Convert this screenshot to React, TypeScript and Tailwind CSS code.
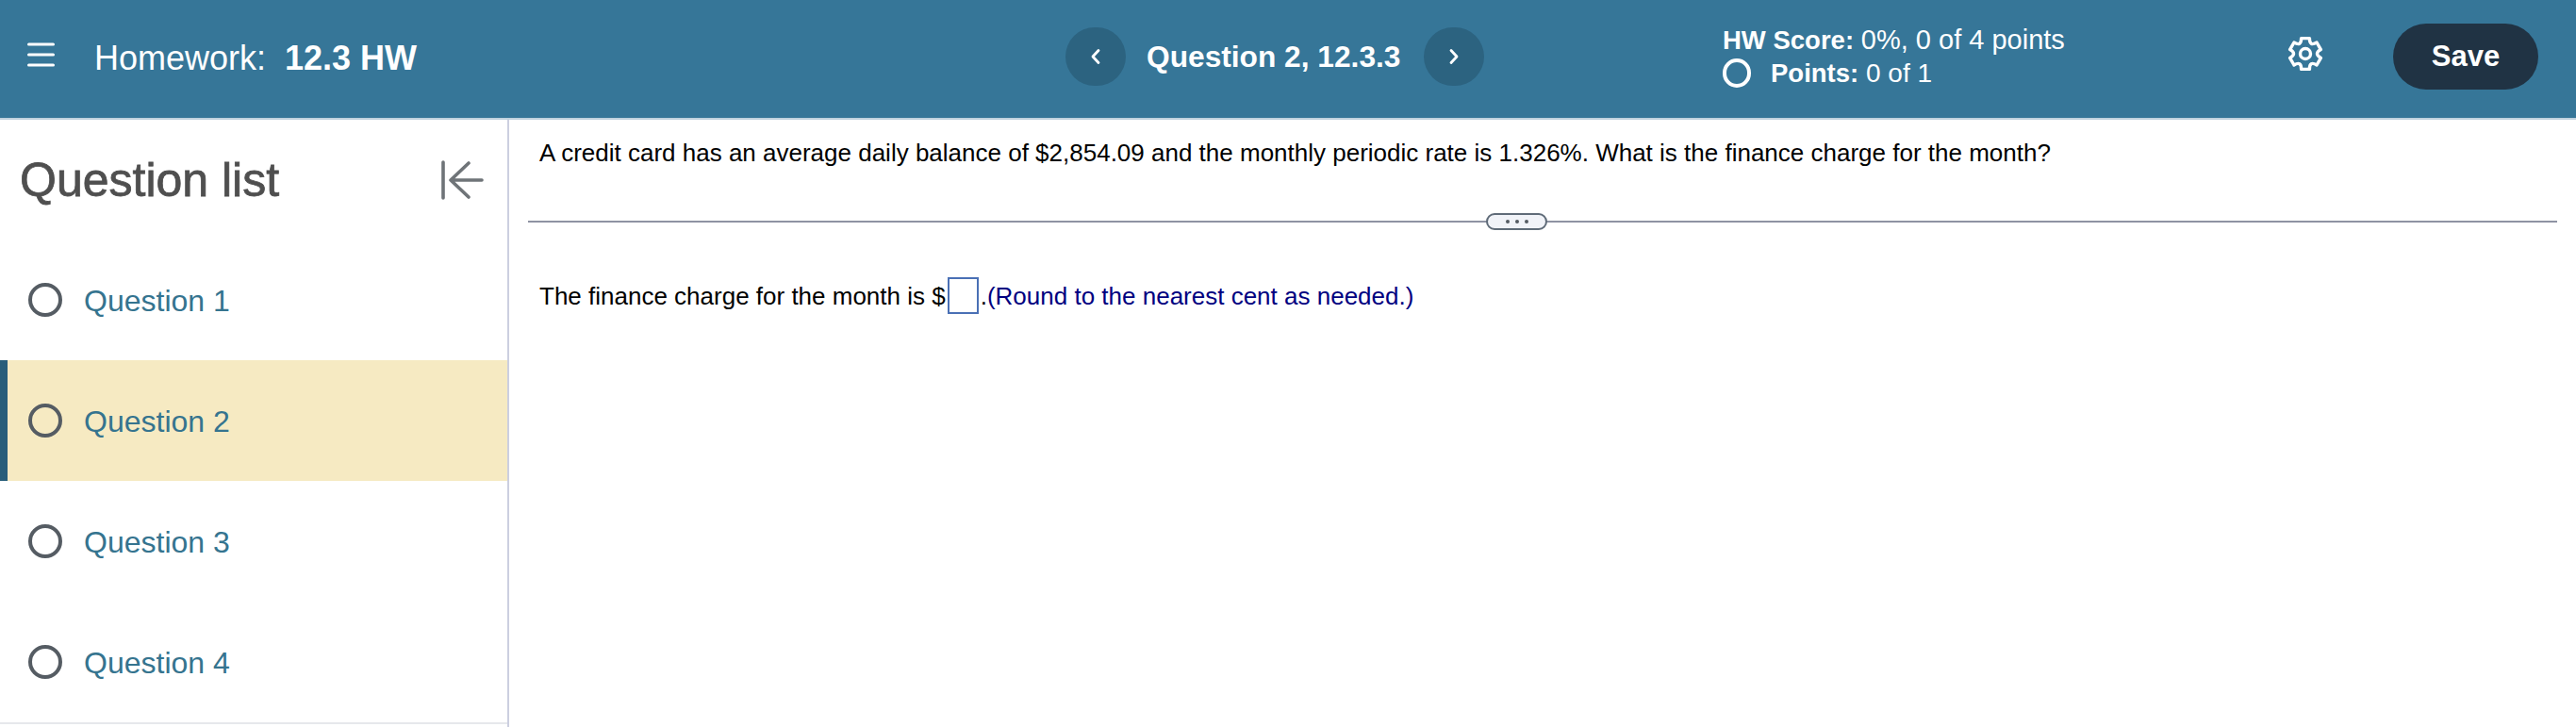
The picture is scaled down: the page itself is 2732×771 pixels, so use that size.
const font = "font-['Liberation_Sans',Arial,sans-serif]"

const questions = ['Question 1', 'Question 2', 'Question 3', 'Question 4']

// six rounded lobes, flat on top and bottom
function gearPath() {
  const c = 20
  const at = (deg: number, r: number) => {
    const a = (deg * Math.PI) / 180
    return `${(c + r * Math.cos(a)).toFixed(2)} ${(c + r * Math.sin(a)).toFixed(2)}`
  }
  let d = `M${at(-90 - 15, 17)}`
  for (let i = 0; i < 6; i++) {
    const mid = -90 + i * 60
    d += ` L${at(mid + 15, 17)} Q${at(mid + 30, 8.5)} ${at(mid + 60 - 15, 17)}`
  }
  return d + 'Z'
}

function GearIcon() {
  return (
    <svg width="40" height="40" viewBox="0 0 40 40" fill="none" stroke="white" strokeWidth="3.4" strokeLinejoin="round" className="mb-[6px] shrink-0">
      <path d={gearPath()} />
      <circle cx="20" cy="20" r="5.5" />
    </svg>
  )
}

function Chevron({ dir }: { dir: 'left' | 'right' }) {
  return (
    <button
      type="button"
      className="flex h-[62px] w-[64px] shrink-0 items-center justify-center rounded-full bg-[#2c6380]"
    >
      <svg width="12" height="18" viewBox="0 0 12 18" fill="none" stroke="white" strokeWidth="2.8" strokeLinecap="round" strokeLinejoin="round">
        {dir === 'left' ? <path d="M9 2.5 3 9l6 6.5" /> : <path d="m3 2.5 6 6.5-6 6.5" />}
      </svg>
    </button>
  )
}

function Header() {
  return (
    <header className="flex h-[127px] items-center border-b-2 border-[#c0d2de] bg-[#367698] pb-[5px] text-white">
      {/* menu + title */}
      <div className="flex w-[1130px] shrink-0 items-center pl-[29px]">
        <svg width="29" height="26" viewBox="0 0 29 26" fill="none" stroke="white" strokeWidth="3" strokeLinecap="round" className="mb-[4px]">
          <path d="M1.5 2h26M1.5 13h26M1.5 24h26" />
        </svg>
        <span className="mt-[3px] ml-[42px] text-[36px] whitespace-pre">
          Homework:  <b>12.3 HW</b>
        </span>
      </div>

      {/* question nav */}
      <div className="flex w-[697px] shrink-0 items-center">
        <Chevron dir="left" />
        <span className="mt-[1px] ml-[22px] w-[294px] text-[31.7px] font-bold whitespace-nowrap">Question 2, 12.3.3</span>
        <Chevron dir="right" />
      </div>

      {/* score */}
      <div className="flex w-[598px] shrink-0 flex-col text-[28px] leading-[35px]">
        <div>
          <b className="text-[27.5px]">HW Score:</b> <span className="text-[29px]">0%, 0 of 4 points</span>
        </div>
        <div className="flex items-center">
          <span className="mr-[21px] h-[31px] w-[30px] rounded-full border-[4px] border-white" />
          <span>
            <b className="text-[27.5px]">Points:</b> 0 of 1
          </span>
        </div>
      </div>

      <GearIcon />

      <button
        type="button"
        className="ml-[73px] h-[70px] w-[154px] rounded-full bg-[#203344] text-[31px] font-bold text-white"
      >
        Save
      </button>
    </header>
  )
}

function Sidebar() {
  return (
    <aside className="h-[644px] w-[540px] shrink-0 border-r-2 border-[#cccfe0]">
      <div className="flex h-[127px] items-center justify-between pr-[25px] pl-[21px]">
        <h2 className="mt-[2px] text-[50px] text-[#4f4f4f] [-webkit-text-stroke:0.8px_#4f4f4f]">Question list</h2>
        <svg width="46" height="42" viewBox="0 0 46 42" fill="none" stroke="#6f7478" strokeWidth="3.6" strokeLinecap="round" strokeLinejoin="round">
          <path d="M3 2v38M44 21H11M30 3 11 21l19 18" />
        </svg>
      </div>
      <ul className="border-b-2 border-[#e6e8ec]">
        {questions.map((q) => {
          const active = q === 'Question 2'
          return (
            <li
              key={q}
              className={`flex h-[128px] items-center ${active ? 'border-l-[8px] border-[#285e7a] bg-[#f6eac2] pl-[22px]' : 'pl-[30px]'}`}
            >
              <span className="h-[36px] w-[36px] rounded-full border-[4px] border-[#555c63]" />
              <span className="mt-[1px] ml-[23px] text-[32px] text-[#35748f]">{q}</span>
            </li>
          )
        })}
      </ul>
    </aside>
  )
}

function Question() {
  return (
    <main className="min-w-0 flex-1 px-[20px] text-[26px] text-black">
      <p className="pt-[16px] pl-[12px] leading-[38px] whitespace-nowrap">
        A credit card has an average daily balance of $2,854.09 and the monthly periodic rate is 1.326%. What is the finance charge for the month?
      </p>
      <div className="relative mt-[53px] h-[2px] bg-[#8f93a3]">
        <div className="absolute top-[-8px] left-[1016px] flex h-[18px] w-[65px] items-center justify-center gap-[6px] rounded-full border-2 border-[#5f6b78] bg-[#f1f3f8]">
          <i className="h-[4px] w-[4px] rounded-full bg-[#555c63]" />
          <i className="h-[4px] w-[4px] rounded-full bg-[#555c63]" />
          <i className="h-[4px] w-[4px] rounded-full bg-[#555c63]" />
        </div>
      </div>
      <div className="flex items-center pt-[58px] pl-[12px] leading-[38px] whitespace-nowrap">
        <span>The finance charge for the month is $</span>
        <span className="ml-[2px] h-[39px] w-[33px] border-2 border-[#4a70b5]" />
        <span className="ml-[2px] text-[#000080]">
          <span className="text-black">.</span>(Round to the nearest cent as needed.)
        </span>
      </div>
    </main>
  )
}

export default function App() {
  return (
    <div className={`h-[771px] w-[2732px] overflow-hidden bg-white ${font}`}>
      <Header />
      <div className="flex">
        <Sidebar />
        <Question />
      </div>
    </div>
  )
}
